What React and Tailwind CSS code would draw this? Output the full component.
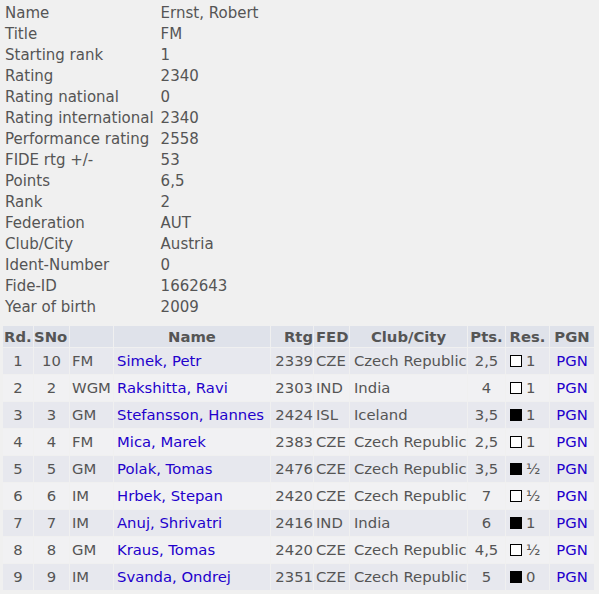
const info = [
  ['Name', 'Ernst, Robert'],
  ['Title', 'FM'],
  ['Starting rank', '1'],
  ['Rating', '2340'],
  ['Rating national', '0'],
  ['Rating international', '2340'],
  ['Performance rating', '2558'],
  ['FIDE rtg +/-', '53'],
  ['Points', '6,5'],
  ['Rank', '2'],
  ['Federation', 'AUT'],
  ['Club/City', 'Austria'],
  ['Ident-Number', '0'],
  ['Fide-ID', '1662643'],
  ['Year of birth', '2009'],
]

const games = [
  [1, 10, 'FM', 'Simek, Petr', 2339, 'CZE', 'Czech Republic', '2,5', 'w', '1'],
  [2, 2, 'WGM', 'Rakshitta, Ravi', 2303, 'IND', 'India', '4', 'w', '1'],
  [3, 3, 'GM', 'Stefansson, Hannes', 2424, 'ISL', 'Iceland', '3,5', 'b', '1'],
  [4, 4, 'FM', 'Mica, Marek', 2383, 'CZE', 'Czech Republic', '2,5', 'w', '1'],
  [5, 5, 'GM', 'Polak, Tomas', 2476, 'CZE', 'Czech Republic', '3,5', 'b', '½'],
  [6, 6, 'IM', 'Hrbek, Stepan', 2420, 'CZE', 'Czech Republic', '7', 'w', '½'],
  [7, 7, 'IM', 'Anuj, Shrivatri', 2416, 'IND', 'India', '6', 'b', '1'],
  [8, 8, 'GM', 'Kraus, Tomas', 2420, 'CZE', 'Czech Republic', '4,5', 'w', '½'],
  [9, 9, 'IM', 'Svanda, Ondrej', 2351, 'CZE', 'Czech Republic', '5', 'b', '0'],
]

export default function App() {
  return (
    <div className="h-[594px] w-[599px] overflow-hidden bg-[#f0f0f0] text-[#555] font-['DejaVu_Sans',Verdana,sans-serif]">
      <table className="ml-[2px] mt-[2px] border-separate border-spacing-0 text-[15px] leading-[18px]">
        <tbody>
          {info.map(([label, value]) => (
            <tr key={label} className="h-[21px]">
              <td className="w-[154px] pl-[3px] pr-1 align-middle whitespace-nowrap">{label}</td>
              <td className="pl-[3px] align-middle">{value}</td>
            </tr>
          ))}
        </tbody>
      </table>
      <table className="ml-[2px] mt-[8px] w-[593px] table-fixed border-separate border-spacing-[1px] text-[14.8px] leading-[18px]">
        <colgroup>
          <col className="w-[30px]" />
          <col className="w-[35px]" />
          <col className="w-[43px]" />
          <col className="w-[156px]" />
          <col className="w-[42px]" />
          <col className="w-[35px]" />
          <col className="w-[117px]" />
          <col className="w-[37px]" />
          <col className="w-[43px]" />
          <col className="w-[44px]" />
        </colgroup>
        <thead>
          <tr className="h-[21px] bg-[#dfe2ea] font-bold">
            <th className="text-left pl-[1px] whitespace-nowrap">Rd.</th>
            <th className="text-left whitespace-nowrap">SNo</th>
            <th></th>
            <th className="text-center">Name</th>
            <th className="text-right whitespace-nowrap">Rtg</th>
            <th className="text-left pl-[2px]">FED</th>
            <th className="text-center whitespace-nowrap">Club/City</th>
            <th className="text-center whitespace-nowrap">Pts.</th>
            <th className="text-center whitespace-nowrap">Res.</th>
            <th className="text-center">PGN</th>
          </tr>
        </thead>
        <tbody>
          {games.map((g, i) => (
            <tr key={g[0]} className={`h-[26px] ${i % 2 === 0 ? 'bg-[#e7e8ee]' : 'bg-[#f1f1f3]'}`}>
              <td className="text-center">{g[0]}</td>
              <td className="text-center">{g[1]}</td>
              <td className="pl-[2px] whitespace-nowrap">{g[2]}</td>
              <td className="pl-[3px] whitespace-nowrap text-[#2200cc]">{g[3]}</td>
              <td className="text-right whitespace-nowrap">{g[4]}</td>
              <td className="pl-[2px]">{g[5]}</td>
              <td className="pl-[4px] whitespace-nowrap">{g[6]}</td>
              <td className="text-center">{g[7]}</td>
              <td className="pl-[4px] whitespace-nowrap">
                <span className="inline-flex items-center gap-[4px]">
                  <span className={`inline-block h-[12px] w-[12px] border border-black ${g[8] === 'b' ? 'bg-black' : 'bg-white'}`} />
                  <span>{g[9]}</span>
                </span>
              </td>
              <td className="text-center text-[#2200cc]">PGN</td>
            </tr>
          ))}
        </tbody>
      </table>
      <div className="mt-[1px] pl-[4px] whitespace-nowrap text-[14.8px] leading-[18px] text-[#555]">Note: rating difference of more than 400 - rating limited to 400</div>
    </div>
  )
}
